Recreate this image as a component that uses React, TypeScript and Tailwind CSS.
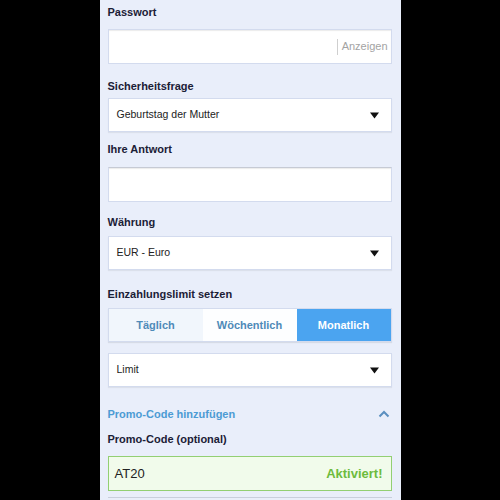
import React from "react";

const font = { fontFamily: '"Liberation Sans", Arial, sans-serif' };

function Label({ children, className = "" }: { children: React.ReactNode; className?: string }) {
  return (
    <div className={`text-[11px] leading-[14px] font-bold text-[#1b2036] ${className}`}>{children}</div>
  );
}

function Caret() {
  return (
    <svg width="9" height="7" viewBox="0 0 9 7" className="shrink-0">
      <polygon points="0,0.5 9,0.5 4.5,6.5" fill="#111" />
    </svg>
  );
}

function Select({ value, className = "" }: { value: string; className?: string }) {
  return (
    <div
      className={`h-[34px] flex items-center justify-between bg-white border border-[#d3dbee] pl-[8px] pr-[12px] shadow-[0_1px_1px_rgba(0,0,0,0.06)] ${className}`}
    >
      <span className="text-[10.5px] text-[#222]">{value}</span>
      <Caret />
    </div>
  );
}

export default function App() {
  return (
    <div className="w-[500px] h-[500px] bg-black flex justify-center overflow-hidden" style={font}>
      <div className="w-[301px] h-[500px] bg-[#e9eefa] pl-[8px] pr-[9px] pt-[5px] flex flex-col">
        <Label>Passwort</Label>
        <div className="mt-[10px] h-[35px] bg-white border border-[#d3dbee] shadow-[inset_0_1px_1px_rgba(0,0,0,0.08)] flex items-center justify-end pr-[3px]">
          <div className="w-px h-[16px] bg-[#cfcfcf] mr-[4px]" />
          <span className="text-[11px] text-[#a3a3a3]">Anzeigen</span>
        </div>

        <Label className="mt-[15px]">Sicherheitsfrage</Label>
        <Select value="Geburtstag der Mutter" className="mt-[5px]" />

        <Label className="mt-[10px]">Ihre Antwort</Label>
        <div className="mt-[11px] h-[35px] bg-white border border-[#d3dbee] border-t-[#c6cad4] shadow-[inset_0_1px_1px_rgba(0,0,0,0.08)]" />

        <Label className="mt-[13px]">Währung</Label>
        <Select value="EUR - Euro" className="mt-[7px]" />

        <Label className="mt-[17px]">Einzahlungslimit setzen</Label>
        <div className="mt-[7px] h-[34px] grid grid-cols-3 border border-[#d3dbee] shadow-[0_1px_1px_rgba(0,0,0,0.08)]">
          <div className="bg-[#f1f6fc] flex items-center justify-center text-[11px] font-bold text-[#4f8ab8]">Täglich</div>
          <div className="bg-[#fdfeff] flex items-center justify-center text-[11px] font-bold text-[#4f8ab8]">Wöchentlich</div>
          <div className="bg-[#4ba4f0] flex items-center justify-center text-[11px] font-bold text-white">Monatlich</div>
        </div>

        <Select value="Limit" className="mt-[11px]" />

        <div className="mt-[20px] h-[14px] flex items-center justify-between pr-[2px]">
          <span className="text-[11px] font-bold text-[#4c9bd4]">Promo-Code hinzufügen</span>
          <svg width="12" height="8" viewBox="0 0 12 8">
            <polyline points="1.5,6.5 6,2 10.5,6.5" fill="none" stroke="#5b8fbf" strokeWidth="2" />
          </svg>
        </div>

        <Label className="mt-[11px]">Promo-Code (optional)</Label>
        <div className="mt-[10px] h-[35px] bg-[#f1fbeb] border border-[#93cf73] flex items-center justify-between pl-[6px] pr-[8px]">
          <span className="text-[13px] text-[#222]">AT20</span>
          <span className="text-[13px] font-bold text-[#6dbb3d]">Aktiviert!</span>
        </div>
        <div className="mt-[6px] h-px bg-[#c9cfdc]" />
      </div>
    </div>
  );
}
